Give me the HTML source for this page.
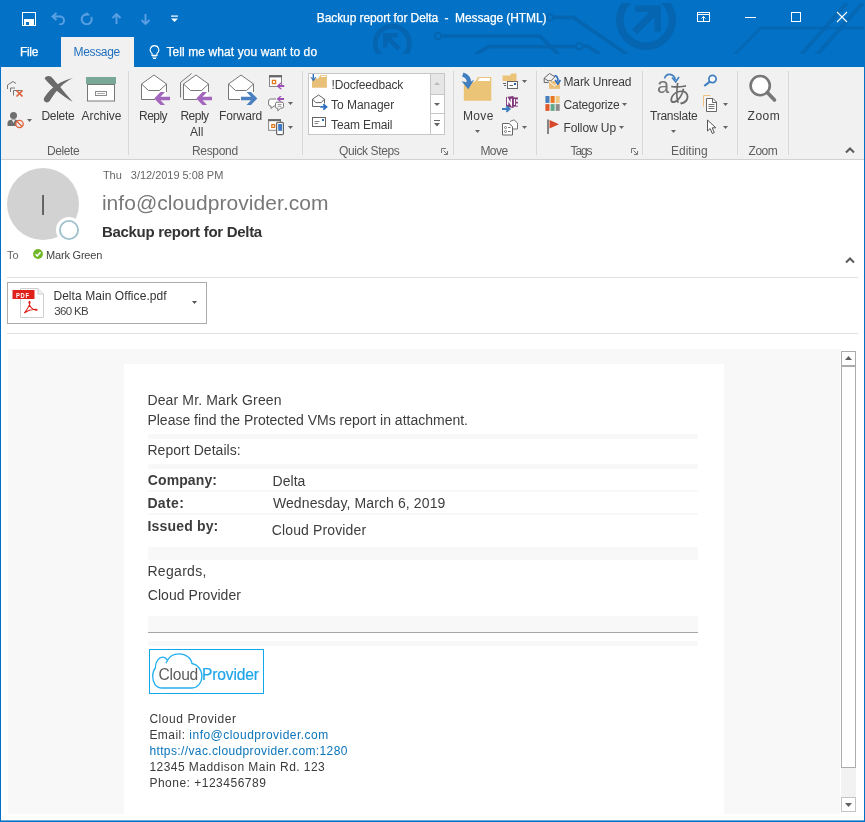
<!DOCTYPE html>
<html><head><meta charset="utf-8"><title>Backup report for Delta - Message (HTML)</title>
<style>
html,body{margin:0;padding:0;}
body{width:865px;height:822px;overflow:hidden;position:relative;background:#fff;font-family:"Liberation Sans",sans-serif;font-size:12px;color:#444;}
.a{position:absolute;white-space:nowrap;line-height:1;}
.ui{font-family:"DejaVu Sans","Liberation Sans",sans-serif;}
#tb{left:0;top:0;width:865px;height:67px;background:#0372c6;}
#rb{left:1px;top:67px;width:863px;height:92px;background:#f1f1f1;border-bottom:1px solid #d2d2d2;}
#bl{left:0;top:0;width:1px;height:822px;background:#0372c6;}
#br{left:864px;top:0;width:1px;height:822px;background:#0372c6;}
#bb{left:0;top:821px;width:865px;height:1px;background:#0372c6;}
.sep{width:1px;top:71px;height:84px;background:#d8d8d8;}
.w{color:#fff;-webkit-text-stroke:0.25px #fff;}
.gl{color:#5e5e5e;top:145.200px;}
.rt{color:#3c3c3c;}
.hl{height:1px;background:#e1e1e1;left:7px;width:851px;}
#mail{left:8px;top:349px;width:832px;height:465px;background:#f8f8f8;}
#card{left:124px;top:364px;width:600px;height:450px;background:#fff;}
.bar{left:148px;width:550px;background:#f8f8f8;}
.bt{font-size:14px;color:#3d3d3d;}
.st{font-size:12px;color:#3a3a3a;}
.lk{color:#0a74b9;}
</style></head><body>
<div id="root" style="position:absolute;left:0;top:0;width:865px;height:822px;will-change:transform;">
<div class="a" id="tb"></div>
<div class="a" id="rb"></div>
<!-- TITLE -->
<svg class="a" style="left:0;top:3px" width="865" height="51" viewBox="0 3 865 51">
<g fill="none" stroke="#0565b0" stroke-opacity="1">
<circle cx="392.300" cy="43.300" r="17" stroke-width="5"/>
<path d="M385.300 47.500 V35.300 H397.500" stroke-width="4.600" stroke-linejoin="miter"/>
<path d="M386.500 36.500 L399 49" stroke-width="5"/>
<circle cx="438" cy="36" r="3.300" stroke-width="2"/>
<path d="M442 36 H540 L558.500 54.500" stroke-width="3.600"/>
<path d="M474.500 55 L488.500 46.600 H575" stroke-width="3.600"/>
<circle cx="579.400" cy="46.300" r="3.200" stroke-width="2"/>
<path d="M583.500 46.300 H588 L600 54.500" stroke-width="3.600"/>
<circle cx="550" cy="17.400" r="3.200" stroke-width="2"/>
<path d="M554 17.400 H573.500 L628 55" stroke-width="3.600"/>
<circle cx="646.100" cy="20" r="26.200" stroke-width="7.600"/>
<path d="M635 8.700 H657.700 V31.500" stroke-width="6.400" stroke-linejoin="miter"/>
<path d="M656 10.500 L634.500 32" stroke-width="7"/>
</g>
<g fill="none" stroke="#0565b0" stroke-opacity="0.8">
<path d="M734 55 L760.500 28 H865" stroke-width="3"/>
<path d="M800 56 L848.500 1" stroke-width="4"/>
<path d="M816 56 L864.500 1" stroke-width="4"/>
</g>
</svg>

<div class="a w" id="title" style="left:316.8px;top:12.2px;font-size:12px;letter-spacing:-0.09px;">Backup report for Delta&nbsp; -&nbsp; Message (HTML)</div>
<div class="a w" id="tfile" style="left:20px;top:45.8px;font-size:12px;letter-spacing:-0.34px;">File</div>
<div class="a" style="left:61px;top:37px;width:73px;height:30px;background:#f1f1f1;"></div>
<div class="a" id="tmsg" style="left:73.5px;top:45.8px;font-size:12px;color:#1e6fbf;letter-spacing:-0.34px;">Message</div>
<div class="a w" id="ttell" style="left:166.4px;top:45.8px;font-size:12px;letter-spacing:0.1px;">Tell me what you want to do</div>
<!-- RIBBON -->
<div class="a sep" style="left:128px"></div>
<div class="a sep" style="left:302px"></div>
<div class="a sep" style="left:453px"></div>
<div class="a sep" style="left:536px"></div>
<div class="a sep" style="left:642px"></div>
<div class="a sep" style="left:737px"></div>
<div class="a sep" style="left:788px"></div>
<div class="a gl" id="g1" style="left:47px;letter-spacing:-0.4px;">Delete</div>
<div class="a gl" id="g2" style="left:192px;letter-spacing:-0.33px;">Respond</div>
<div class="a gl" id="g3" style="left:339px;letter-spacing:-0.4px;">Quick Steps</div>
<div class="a gl" id="g4" style="left:480.4px;letter-spacing:-0.55px;">Move</div>
<div class="a gl" id="g5" style="left:570.5px;letter-spacing:-1.12px;">Tags</div>
<div class="a gl" id="g6" style="left:671px;">Editing</div>
<div class="a gl" id="g7" style="left:748.5px;letter-spacing:-0.44px;">Zoom</div>
<div class="a rt" id="r1" style="left:41.5px;top:110.2px;letter-spacing:-0.3px;">Delete</div>
<div class="a rt" id="r2" style="left:81.5px;top:110.2px;letter-spacing:-0.01px;">Archive</div>
<div class="a rt" id="r3" style="left:139px;top:110.2px;letter-spacing:-0.53px;">Reply</div>
<div class="a rt" id="r4" style="left:180.4px;top:110.2px;letter-spacing:-0.5px;">Reply</div>
<div class="a rt" id="r5" style="left:190px;top:126.2px;">All</div>
<div class="a rt" id="r6" style="left:219px;top:110.2px;letter-spacing:-0.13px;">Forward</div>
<div class="a" style="left:308px;top:73px;width:135px;height:61px;background:#fff;border:1px solid #c6c6c6;box-sizing:border-box;width:137px;height:62px;"></div>
<div class="a rt" id="q1" style="left:331.5px;top:79.2px;letter-spacing:-0.14px;">!Docfeedback</div>
<div class="a rt" id="q2" style="left:331.1px;top:99.2px;letter-spacing:-0.03px;">To Manager</div>
<div class="a rt" id="q3" style="left:331.1px;top:119.2px;letter-spacing:-0.14px;">Team Email</div>
<div class="a rt" id="r7" style="left:463px;top:110.2px;letter-spacing:0.34px;">Move</div>
<div class="a rt" id="t1" style="left:563.5px;top:76.2px;letter-spacing:-0.14px;">Mark Unread</div>
<div class="a rt" id="t2" style="left:563.5px;top:99.2px;letter-spacing:-0.21px;">Categorize</div>
<div class="a rt" id="t3" style="left:563.5px;top:122.2px;letter-spacing:-0.1px;">Follow Up</div>
<div class="a rt" id="r8" style="left:650px;top:110.2px;letter-spacing:-0.23px;">Translate</div>
<div class="a rt" id="r9" style="left:747.5px;top:110.2px;letter-spacing:0.56px;">Zoom</div>
<!-- QAT ICONS -->
<svg class="a" style="left:22px;top:12px" width="14" height="14" viewBox="0 0 14 14"><rect x="0.5" y="0.5" width="13" height="13" fill="none" stroke="#fff"/><rect x="2" y="7" width="10" height="6" fill="#fff"/><rect x="4" y="10" width="3" height="3" fill="#0372c6"/></svg>
<svg class="a" style="left:51px;top:12px" width="15" height="13" viewBox="0 0 15 13"><path d="M5.5 1 L1.5 4.5 L5.5 8 M1.5 4.500 H9 a4 4 0 0 1 0 8 H8" fill="none" stroke="#5a9fe2" stroke-width="2"/></svg>
<svg class="a" style="left:80px;top:12px" width="14" height="13" viewBox="0 0 14 13"><path d="M6.500 2.200 A5 5 0 1 0 11.200 5" fill="none" stroke="#5a9fe2" stroke-width="2"/><path d="M6 0.500 L6 4.500 L10.500 2.500 Z" fill="#5a9fe2" transform="rotate(20 8 2)"/></svg>
<svg class="a" style="left:111px;top:13px" width="11" height="12" viewBox="0 0 11 12"><path d="M5.500 11 V1.500 M1.500 5 L5.500 1 L9.500 5" fill="none" stroke="#5a9fe2" stroke-width="1.900"/></svg>
<svg class="a" style="left:140px;top:13px" width="11" height="12" viewBox="0 0 11 12"><path d="M5.500 1 V10.500 M1.500 7 L5.500 11 L9.500 7" fill="none" stroke="#5a9fe2" stroke-width="1.900"/></svg>
<svg class="a" style="left:171px;top:15px" width="7" height="8" viewBox="0 0 7 8"><rect x="0" y="0.500" width="7" height="1.200" fill="#fff"/><path d="M0 3.500 H7 L3.500 7 Z" fill="#fff"/></svg>
<!-- bulb -->
<svg class="a" style="left:149px;top:45px" width="11" height="14" viewBox="0 0 11 14"><path d="M5.500 0.600 a4.300 4.300 0 0 1 2.500 7.800 V10.400 H3 V8.400 a4.300 4.300 0 0 1 2.500 -7.800 Z" fill="none" stroke="#fff" stroke-width="1.100"/><path d="M3.300 12 H7.700 M4 13.500 H7" stroke="#fff" stroke-width="1"/></svg>
<!-- WINDOW CONTROLS -->
<svg class="a" style="left:697px;top:12px" width="13" height="10" viewBox="0 0 13 10"><rect x="0.500" y="0.500" width="12" height="9" fill="none" stroke="#fff"/><path d="M0.500 2.500 H12.500" stroke="#fff"/><path d="M6.500 9 V4.500 M4.500 6.500 L6.500 4.500 L8.500 6.500" stroke="#fff" fill="none"/></svg>
<div class="a" style="left:745px;top:17px;width:11px;height:1px;background:#fff;"></div>
<div class="a" style="left:791px;top:12px;width:10px;height:10px;border:1px solid #fff;box-sizing:border-box;"></div>
<svg class="a" style="left:836px;top:11px" width="12" height="12" viewBox="0 0 12 12"><path d="M1 1 L11 11 M11 1 L1 11" stroke="#fff" stroke-width="1.100"/></svg>
<!-- DELETE GROUP ICONS -->
<svg class="a" style="left:43px;top:75px" width="31" height="28" viewBox="0 0 31 28"><path d="M1.600 3.400 C2 1.300 5.600 0.200 7.900 1.500 C13.500 7.500 20.500 16 29.600 26.800 C20.500 21.500 8.500 12 1.600 3.400 Z" fill="#6a6a6a"/><path d="M30 3 C20.500 7.500 13.500 15 6.800 25.800 C5.600 27.700 2.700 27.900 1.400 26.300 C0.400 25 0.800 23.300 1.800 21.800 C8.500 12 18 5.800 30 3 Z" fill="#6a6a6a"/></svg>
<svg class="a" style="left:86px;top:77px" width="30" height="25" viewBox="0 0 30 25"><rect x="0" y="0" width="30" height="7" fill="#79a896"/><rect x="1.500" y="7.500" width="27" height="16.500" fill="#fff" stroke="#777" stroke-width="1"/><rect x="9.500" y="14.500" width="11" height="4" fill="#fff" stroke="#8a8a8a" stroke-width="1"/><path d="M11 16.500 H19" stroke="#aaa" stroke-width="1"/></svg>
<!-- ignore -->
<svg class="a" style="left:6px;top:80px" width="18" height="18" viewBox="0 0 18 18"><path d="M1.500 9 V5 L7 1.500 L10 3.500 M4.500 12 V8 H9 M7.500 15.500 V10.500 H16" fill="none" stroke="#777" stroke-width="1"/><path d="M10.500 10.500 L16.500 16.500 M16.500 10.500 L10.500 16.500" stroke="#e0603a" stroke-width="1.700"/></svg>
<!-- junk -->
<svg class="a" style="left:7px;top:111px" width="18" height="18" viewBox="0 0 18 18"><circle cx="6.500" cy="4.500" r="3.500" fill="#6e6e6e"/><path d="M0.500 15 V12 C0.500 9.500 3 8.500 6.500 8.500 C9 8.500 11 9 12 10.500 L9 15 Z" fill="#6e6e6e"/><path d="M5 9 L6.500 12 L8 9 Z" fill="#f1f1f1"/><circle cx="12.500" cy="13" r="3.700" fill="#f1f1f1" stroke="#e0603a" stroke-width="1.300"/><path d="M10 10.500 L15 15.500" stroke="#e0603a" stroke-width="1.300"/></svg>
<svg class="a dd" style="left:27px;top:119px" width="5" height="3" viewBox="0 0 5 3"><path d="M0 0 H5 L2.500 3 Z" fill="#666"/></svg>
<!-- RESPOND ICONS -->
<svg class="a" style="left:141px;top:74px" width="32" height="32" viewBox="0 0 32 32"><path d="M0.500 25.500 V10 L13 1 L25.500 10 V25.500 Z" fill="#fff"/><path d="M14 25.500 H0.500 V10 L13 1 L25.500 10 V18 M0.500 10 L7.500 16.500 H18.500 L25.500 10" fill="none" stroke="#777" stroke-width="1"/><path d="M13.300 24.500 L19.500 18 H24 L19.500 22.700 H29 V26.300 H19.500 L24 31 H19.500 Z" fill="#a366bd"/></svg>
<svg class="a" style="left:179px;top:72px" width="36" height="34" viewBox="0 0 36 34"><path d="M1.500 25.500 V10.500 L12.500 1.500 M4.500 27.500 V12" fill="none" stroke="#777" stroke-width="1"/><path d="M4.500 27.500 V12 L17 3 L29.500 12 V27.500 Z" fill="#fff"/><path d="M18 27.500 H4.500 V12 L17 3 L29.500 12 V20 M4.500 12 L11.500 18.500 H22.500 L29.500 12" fill="none" stroke="#777" stroke-width="1"/><path d="M17.300 26.500 L23.500 20 H28 L23.500 24.700 H33 V28.300 H23.500 L28 33 H23.500 Z" fill="#a366bd"/></svg>
<svg class="a" style="left:228px;top:74px" width="32" height="32" viewBox="0 0 32 32"><path d="M0.500 25.500 V10 L13 1 L25.500 10 V25.500 Z" fill="#fff"/><path d="M12 25.500 H0.500 V10 L13 1 L25.500 10 V18 M0.500 10 L7.500 16.500 H18.500 L25.500 10" fill="none" stroke="#777" stroke-width="1"/><path d="M29.300 24.500 L23 18 H18.500 L23 22.700 H13 V26.300 H23 L18.500 31 H23 Z" fill="#4a7fc0"/></svg>
<!-- small respond icons -->
<svg class="a" style="left:268px;top:74px" width="17" height="16" viewBox="0 0 17 16"><rect x="1.500" y="1.700" width="12" height="10.800" fill="#fff" stroke="#858585"/><rect x="1" y="1.200" width="13" height="2.200" fill="#666"/><rect x="4.400" y="6.400" width="3.200" height="3.200" fill="#fff" stroke="#e07a1f" stroke-width="1.300"/><path d="M8.700 12 L12.300 8.800 H14 L11.800 11 H16.200 V13 H11.800 L14 15.200 H12.300 Z" fill="#9b4fb5"/></svg>
<svg class="a" style="left:268px;top:95px" width="17" height="17" viewBox="0 0 17 17"><path d="M8 4 H2.500 Q0.600 4 0.600 6 V9 Q0.600 11 2.500 11 H3 V13.500 L6 11 H7" fill="#fff" stroke="#777"/><path d="M9 7.200 H14 Q15.500 7.200 15.500 8.700 V11.700 Q15.500 13.200 14 13.200 H12.500 L9.800 15.800 V13.200 H9 Q7.500 13.200 7.500 11.700 V8.700 Q7.500 7.200 9 7.200 Z" fill="#fff" stroke="#777"/><path d="M9.700 9.500 H13.500 M9.700 11.300 H13.500" stroke="#999"/><path d="M8.700 3.900 L12 1 H13.700 L11.600 2.900 H16 V4.900 H11.600 L13.700 6.800 H12 Z" fill="#9b4fb5"/></svg>
<svg class="a" style="left:268px;top:118px" width="17" height="18" viewBox="0 0 17 18"><rect x="0.600" y="1.700" width="11.800" height="10.600" fill="#fff" stroke="#858585"/><rect x="0.100" y="1.200" width="12.800" height="2" fill="#666"/><rect x="3.800" y="6.600" width="2.800" height="2.800" fill="#fff" stroke="#e07a1f" stroke-width="1.300"/><rect x="8.600" y="4.400" width="6.800" height="12.200" rx="1.200" fill="#fff" stroke="#666" stroke-width="1.200"/><rect x="10.200" y="6" width="3.900" height="6.800" fill="#3d7bc7"/></svg>
<svg class="a" style="left:288px;top:102px" width="5" height="3" viewBox="0 0 5 3"><path d="M0 0 H5 L2.500 3 Z" fill="#666"/></svg>
<svg class="a" style="left:288px;top:126px" width="5" height="3" viewBox="0 0 5 3"><path d="M0 0 H5 L2.500 3 Z" fill="#666"/></svg>
<!-- QUICK STEPS -->
<div class="a" style="left:430px;top:74px;width:1px;height:60px;background:#c6c6c6;"></div>
<div class="a" style="left:431px;top:74px;width:13px;height:20px;background:#e6e6e6;"></div>
<div class="a" style="left:431px;top:94px;width:13px;height:1px;background:#c6c6c6;"></div>
<div class="a" style="left:431px;top:113px;width:13px;height:1px;background:#c6c6c6;"></div>
<svg class="a" style="left:434px;top:82px" width="6" height="3" viewBox="0 0 6 3"><path d="M0 3 H6 L3 0 Z" fill="#bbb"/></svg>
<svg class="a" style="left:434px;top:103px" width="6" height="3" viewBox="0 0 6 3"><path d="M0 0 H6 L3 3 Z" fill="#666"/></svg>
<svg class="a" style="left:434px;top:120px" width="6" height="7" viewBox="0 0 6 7"><path d="M0 0.500 H6" stroke="#666"/><path d="M0 3 H6 L3 6.500 Z" fill="#666"/></svg>
<svg class="a" style="left:310px;top:74px" width="18" height="15" viewBox="0 0 18 15"><path d="M2 4.500 H8.400 L10.200 1.200 H16.900 V13.700 H2 Z" fill="#e8c078"/><path d="M11.500 2 H16 V3 H11 Z" fill="#fff"/><path d="M3.300 0 V4.500" stroke="#2f6fbf" stroke-width="1.400"/><path d="M0.800 3.200 L3.400 7.100 L6 3.200 L3.400 4.800 Z" fill="#2f6fbf" stroke="#2f6fbf" stroke-width="0.500"/></svg>
<svg class="a" style="left:311px;top:94px" width="18" height="17" viewBox="0 0 18 17"><path d="M9 12.500 H1.500 V5.100 L7.500 1 L13.500 5.100 V9.500 M1.500 5.100 L4.800 8.600 H10.300 L13.500 5.100" fill="#fff" stroke="#666"/><path d="M9.200 12.900 H15 M12.300 10.200 L15.400 12.900 L12.300 15.600" fill="none" stroke="#2f6fbf" stroke-width="1.900"/></svg>
<svg class="a" style="left:312px;top:117px" width="15" height="11" viewBox="0 0 15 11"><rect x="0.500" y="0.500" width="13" height="9" fill="#fff" stroke="#666"/><path d="M2.500 4.500 H7.500 M2.500 6.500 H6" stroke="#888"/><rect x="10" y="2" width="2" height="2" fill="#2f6fbf"/></svg>
<svg class="a" style="left:441px;top:148px" width="7" height="7" viewBox="0 0 7 7"><path d="M0.500 5 V0.500 H5" fill="none" stroke="#777"/><path d="M2.500 2.500 L6 6 M6.500 3 V6.500 H3" fill="none" stroke="#777"/></svg>
<svg class="a" style="left:631px;top:148px" width="7" height="7" viewBox="0 0 7 7"><path d="M0.500 5 V0.500 H5" fill="none" stroke="#777"/><path d="M2.500 2.500 L6 6 M6.500 3 V6.500 H3" fill="none" stroke="#777"/></svg>
<!-- MOVE ICONS -->
<svg class="a" style="left:461px;top:72px" width="32" height="30" viewBox="0 0 32 30"><path d="M2.800 9.800 H14 L17 5 H30.300 V28.800 H2.800 Z" fill="#ecc478"/><path d="M18.300 6 H29 V9 H16.500 Z" fill="#fff"/><path d="M1.800 2.500 C6 4 8.300 7 7.800 11" fill="none" stroke="#3f7fc1" stroke-width="4.200"/><path d="M0.600 9.300 L7.300 17.300 L13 7.800 L7.800 10.800 Z" fill="#3f7fc1"/></svg>
<svg class="a" style="left:475px;top:130px" width="5" height="3" viewBox="0 0 5 3"><path d="M0 0 H5 L2.500 3 Z" fill="#666"/></svg>
<svg class="a" style="left:502px;top:73px" width="17" height="16" viewBox="0 0 17 16"><path d="M0.500 2.500 H8 L9.500 0.500 H14.500 V8 H0.500 Z" fill="#ecc478"/><rect x="5.500" y="8.500" width="10" height="7" fill="#fff" stroke="#666"/><path d="M1 10.500 H4 M2 12.500 H4 M7.500 12.500 H11" stroke="#666"/><rect x="12" y="10" width="2" height="2" fill="#2f5fa8"/></svg>
<svg class="a" style="left:502px;top:96px" width="17" height="17" viewBox="0 0 17 17"><path d="M11 1.400 H15.900 V10.600 H11 Z" fill="#80397b"/><path d="M14 3.600 H16 V5.700 H14 Z M14 7.500 H16 V9.700 H14 Z" fill="#f1f1f1"/><path d="M4.100 0.900 L11.500 0 V11.900 L4.100 10.600 Z" fill="#80397b"/><path d="M5.700 8.800 V2.800 L9.300 8.800 V2.800" fill="none" stroke="#fff" stroke-width="1.400"/><path d="M12.500 3 V9" stroke="#fff" stroke-width="1.200"/><path d="M0 13 H7 M4.300 10.200 L7.600 13 L4.300 15.800" fill="none" stroke="#3f7fc1" stroke-width="1.900"/></svg>
<svg class="a" style="left:502px;top:119px" width="17" height="17" viewBox="0 0 17 17"><path d="M8 2.500 L12 0.800 L15.500 4 V10 H11" fill="#fff" stroke="#777"/><path d="M0.500 4.500 H7 L10.500 7.500 V16 H0.500 Z" fill="#fff" stroke="#666"/><circle cx="3.500" cy="8.500" r="1" fill="none" stroke="#777"/><circle cx="3.500" cy="12.500" r="1" fill="none" stroke="#777"/><path d="M6 8.500 H8.500 M6 12.500 H8.500" stroke="#777"/></svg>
<svg class="a" style="left:522px;top:80px" width="5" height="3" viewBox="0 0 5 3"><path d="M0 0 H5 L2.500 3 Z" fill="#666"/></svg>
<svg class="a" style="left:522px;top:126px" width="5" height="3" viewBox="0 0 5 3"><path d="M0 0 H5 L2.500 3 Z" fill="#666"/></svg>
<!-- TAGS ICONS -->
<svg class="a" style="left:543px;top:72px" width="18" height="17" viewBox="0 0 18 17"><path d="M5.600 10.500 H1.200 V6.200 L6.500 1.500 L11.900 4.800 M1.200 6.200 L5 8.800 H8 L11.900 4.800" fill="none" stroke="#666"/><path d="M6 9.100 H17 V16.900 H6 Z" fill="#ecc07a"/><path d="M6 9.600 L11.500 13.800 L17 9.600" fill="none" stroke="#fff" stroke-width="1"/><path d="M11.500 3.600 C14 3.600 15.200 6 14.900 9.500" fill="none" stroke="#2f6fbf" stroke-width="1.600"/><path d="M12.200 8 L14.800 12 L17.400 8" fill="none" stroke="#2f6fbf" stroke-width="1.700"/></svg>
<svg class="a" style="left:544.500px;top:96px" width="15" height="15" viewBox="0 0 15 15"><rect x="0.400" y="0" width="4.100" height="6.900" fill="#4a7ebb"/><rect x="5.600" y="0" width="4" height="6.900" fill="#e8771f"/><rect x="10.700" y="0" width="4" height="6.900" fill="#f0c882"/><rect x="0.400" y="8.100" width="4.100" height="6.800" fill="#e25a2c"/><rect x="5.600" y="8.100" width="4" height="6.800" fill="#5fa88a"/><rect x="10.700" y="8.100" width="4" height="6.800" fill="#8c8c8c"/></svg>
<svg class="a" style="left:546px;top:119px" width="14" height="16" viewBox="0 0 14 16"><path d="M2 0.500 V15" stroke="#6a6a6a" stroke-width="1.600"/><path d="M3.500 1 L13 5.200 L3.500 9.500 Z" fill="#d9482b"/></svg>
<svg class="a" style="left:622px;top:103px" width="5" height="3" viewBox="0 0 5 3"><path d="M0 0 H5 L2.500 3 Z" fill="#666"/></svg>
<svg class="a" style="left:619px;top:126px" width="5" height="3" viewBox="0 0 5 3"><path d="M0 0 H5 L2.500 3 Z" fill="#666"/></svg>
<!-- EDITING ICONS -->
<div class="a" id="tra" style="left:657px;top:75px;font-size:22px;color:#777;font-family:'Liberation Sans',sans-serif;">a</div>
<div class="a" id="trj" style="left:668px;top:83px;font-size:24.5px;color:#6a6a6a;font-family:'Liberation Sans','Noto Sans CJK JP',sans-serif;transform:scaleX(0.92);transform-origin:0 0;">あ</div>
<svg class="a" style="left:663px;top:72px" width="17" height="12" viewBox="0 0 17 12"><path d="M1.500 6.500 C3 1 10.500 0.500 12.500 8" fill="none" stroke="#3f7fc1" stroke-width="1.600"/><path d="M9 5.500 L12.700 10 L16 5" fill="none" stroke="#3f7fc1" stroke-width="1.600"/></svg>
<svg class="a" style="left:671px;top:130px" width="5" height="3" viewBox="0 0 5 3"><path d="M0 0 H5 L2.500 3 Z" fill="#666"/></svg>
<svg class="a" style="left:703px;top:74px" width="15" height="14" viewBox="0 0 15 14"><circle cx="9.500" cy="5" r="3.600" fill="#fff" stroke="#3f7fc1" stroke-width="1.700"/><path d="M6.800 7.700 L1.300 12" stroke="#3f7fc1" stroke-width="2.200"/></svg>
<svg class="a" style="left:703px;top:95px" width="15" height="18" viewBox="0 0 15 18"><path d="M0.500 11.500 V0.500 H7.500" fill="none" stroke="#f0c080" stroke-width="1"/><path d="M3.500 3.500 H10 L13.500 7 V16.500 H3.500 Z" fill="#fff" stroke="#666"/><path d="M9.500 3.500 V7.500 H13.500" fill="none" stroke="#666"/><path d="M5.500 9.500 H11.500 M5.500 11.500 H11.500 M5.500 13.500 H11.500" stroke="#777"/></svg>
<svg class="a" style="left:706px;top:119px" width="11" height="16" viewBox="0 0 11 16"><path d="M1.500 1 V12 L4.200 9.500 L6.300 14.500 L8.300 13.600 L6.200 8.800 H9.800 Z" fill="#fff" stroke="#555" stroke-width="1"/></svg>
<svg class="a" style="left:723px;top:103px" width="5" height="3" viewBox="0 0 5 3"><path d="M0 0 H5 L2.500 3 Z" fill="#666"/></svg>
<svg class="a" style="left:723px;top:126px" width="5" height="3" viewBox="0 0 5 3"><path d="M0 0 H5 L2.500 3 Z" fill="#666"/></svg>
<!-- ZOOM ICON -->
<svg class="a" style="left:748px;top:73px" width="30" height="30" viewBox="0 0 30 30"><circle cx="12.200" cy="12.600" r="9.600" fill="#fff" stroke="#777" stroke-width="2.600"/><path d="M19.300 19.500 L26.500 27" stroke="#777" stroke-width="3.600" stroke-linecap="round"/></svg>
<svg class="a" style="left:845px;top:147px" width="10" height="7" viewBox="0 0 10 7"><path d="M1 5.500 L5 1.500 L9 5.500" fill="none" stroke="#5a5a5a" stroke-width="2"/></svg>
<!-- HEADER -->
<div class="a" style="left:7px;top:168px;width:72px;height:72px;border-radius:50%;background:#d2d2d2;"></div>
<div class="a" id="av" style="left:36px;top:189.5px;width:14px;text-align:center;font-size:30px;color:#444;transform:scaleX(0.55);">I</div>
<div class="a" style="left:56px;top:217px;width:26px;height:26px;border-radius:50%;background:#fff;"></div><svg class="a" style="left:58px;top:219px" width="22" height="22" viewBox="0 0 22 22"><circle cx="11" cy="11" r="9.100" fill="#fff" stroke="#9fc0cd" stroke-width="1.800"/></svg>
<div class="a" id="h1" style="left:102.9px;top:170px;font-size:11px;color:#666;letter-spacing:-0.03px;">Thu&nbsp;&nbsp; 3/12/2019 5:08 PM</div>
<div class="a" id="h2" style="left:101.9px;top:191.5px;font-size:21px;color:#787878;letter-spacing:0.05px;">info@cloudprovider.com</div>
<div class="a" id="h3" style="left:101.9px;top:224px;font-size:15px;color:#333;font-weight:bold;letter-spacing:-0.29px;">Backup report for Delta</div>
<div class="a" id="h4" style="left:7px;top:250px;font-size:11px;color:#666;">To</div>
<div class="a" id="h5" style="left:46.1px;top:250px;font-size:11px;color:#444;letter-spacing:-0.21px;">Mark Green</div>
<div class="a hl" style="top:277px;"></div>
<div class="a" style="left:7px;top:282px;width:200px;height:42px;border:1px solid #ababab;box-sizing:border-box;background:#fff;"></div>
<div class="a" id="at1" style="left:53.4px;top:290px;font-size:12px;color:#333;letter-spacing:0.07px;">Delta Main Office.pdf</div>
<div class="a" id="at2" style="left:54.2px;top:306px;font-size:11.5px;color:#444;letter-spacing:-0.65px;">360 KB</div>
<div class="a hl" style="top:333px;"></div>
<svg class="a" style="left:33px;top:249px" width="10" height="10" viewBox="0 0 10 10"><circle cx="5" cy="5" r="4.900" fill="#73b72b"/><path d="M2.600 5.200 L4.300 6.900 L7.500 3.300" fill="none" stroke="#fff" stroke-width="1.500"/></svg>
<!-- pdf icon -->
<svg class="a" style="left:11.600px;top:287.300px" width="33" height="32" viewBox="0 0 33 32"><path d="M8.500 1.500 H26 L31.500 7 V30.500 H8.500 Z" fill="#fff" stroke="#cfcfcf"/><path d="M26 1.500 V7 H31.500" fill="#eee" stroke="#cfcfcf"/><rect x="0.500" y="3" width="22" height="9" fill="#e0201b"/><path d="M13 25 C15.500 22 17.500 18.500 18 15.500 C18.300 14 16.800 14 17 15.500 C17.500 19 20 22.500 24 23.300 C25.500 23.500 25.300 22.200 24 22.200 C20 22.200 16 23.500 13.500 25.300 C12.300 26.200 12.300 25.800 13 25 Z" fill="none" stroke="#e0201b" stroke-width="1.100"/></svg>
<div class="a" id="pdft" style="left:16.300px;top:291.600px;font-size:7px;font-weight:bold;color:#fff;letter-spacing:0.900px;transform:scaleX(0.82);transform-origin:0 0;">PDF</div>
<svg class="a" style="left:192px;top:301px" width="5" height="3" viewBox="0 0 5 3"><path d="M0 0 H5 L2.500 3 Z" fill="#555"/></svg>
<svg class="a" style="left:845px;top:257px" width="10" height="7" viewBox="0 0 10 7"><path d="M1 5.500 L5 1.500 L9 5.500" fill="none" stroke="#5a5a5a" stroke-width="2"/></svg>
<!-- MAIL -->
<div class="a" id="mail"></div>
<div class="a" id="card"></div>
<div class="a bt" id="m1" style="left:147.4px;top:393px;letter-spacing:0.15px;">Dear Mr. Mark Green</div>
<div class="a bt" id="m2" style="left:147.4px;top:413px;">Please find the Protected VMs report in attachment.</div>
<div class="a bar" style="top:434px;height:5px;"></div>
<div class="a bt" id="m3" style="left:147.4px;top:443px;letter-spacing:0.05px;">Report Details:</div>
<div class="a bar" style="top:464px;height:5px;"></div>
<div class="a bt" id="m4" style="left:147.8px;top:473px;font-weight:bold;letter-spacing:0.1px;">Company:</div>
<div class="a bt" id="m5" style="left:272.6px;top:474px;letter-spacing:0.02px;">Delta</div>
<div class="a bar" style="top:490px;height:2px;"></div>
<div class="a bt" id="m6" style="left:147.4px;top:496px;font-weight:bold;letter-spacing:0.37px;">Date:</div>
<div class="a bt" id="m7" style="left:272.9px;top:496px;letter-spacing:0.11px;">Wednesday, March 6, 2019</div>
<div class="a bar" style="top:513px;height:2px;"></div>
<div class="a bt" id="m8" style="left:147.5px;top:519px;font-weight:bold;letter-spacing:0.17px;">Issued by:</div>
<div class="a bt" id="m9" style="left:271.8px;top:523px;letter-spacing:0.13px;">Cloud Provider</div>
<div class="a bar" style="top:547px;height:13px;"></div>
<div class="a bt" id="m10" style="left:147.4px;top:564px;letter-spacing:0.32px;">Regards,</div>
<div class="a bt" id="m11" style="left:147.8px;top:588px;letter-spacing:0.04px;">Cloud Provider</div>
<div class="a bar" style="top:616px;height:16px;"></div>
<div class="a" style="left:148px;top:632px;width:550px;height:1px;background:#a6a6a6;"></div>
<div class="a bar" style="top:641px;height:5px;"></div>
<div class="a" style="left:149px;top:649px;width:115px;height:45px;border:1px solid #12a8ea;box-sizing:border-box;"></div>
<svg class="a" style="left:150px;top:650px" width="56" height="42" viewBox="150 650 56 42"><path d="M162 688 C155.500 688 152.700 682 152.700 676.300 C152.700 672.500 153.800 669.800 155.300 668 C155.300 661.500 159 657.200 162.500 657.200 C164.500 657.200 166.200 658.300 167.600 660.300 C169.500 656.300 174 653.800 179 653.800 C186 653.800 191.500 658.500 192 663.500 C197.500 664.500 201.900 669.500 201.900 676.300 C201.900 683 197.500 688 192 688 Z" fill="none" stroke="#25b0f0" stroke-width="1.300"/><path d="M167.600 660.300 C166.800 661.300 166.300 662.300 166 663.300" fill="none" stroke="#25b0f0" stroke-width="1.300"/></svg>
<div class="a" id="lg1" style="left:158.5px;top:667.3px;font-size:15.6px;color:#5c5c5c;letter-spacing:-0.25px;">Cloud</div>
<div class="a" id="lg2" style="left:202px;top:667.3px;font-size:15.6px;color:#1fa6ea;-webkit-text-stroke:0.2px #1fa6ea;letter-spacing:-0.15px;">Provider</div>
<div class="a st" id="s1" style="left:149.4px;top:713px;letter-spacing:0.55px;">Cloud Provider</div>
<div class="a st" id="s2" style="left:149.4px;top:729px;letter-spacing:0.47px;">Email: <span class="lk">info@cloudprovider.com</span></div>
<div class="a st lk" id="s3" style="left:149.4px;top:745px;letter-spacing:0.38px;">https://vac.cloudprovider.com:1280</div>
<div class="a st" id="s4" style="left:149.4px;top:761px;letter-spacing:0.46px;">12345 Maddison Main Rd. 123</div>
<div class="a st" id="s5" style="left:149.4px;top:777px;letter-spacing:0.5px;">Phone: +123456789</div>
<!-- SCROLLBAR -->
<div class="a" style="left:841px;top:351px;width:15px;height:461px;background:#f2f2f2;"></div>
<div class="a" style="left:841px;top:351px;width:15px;height:15px;background:#fff;border:1px solid #ababab;box-sizing:border-box;"></div>
<div class="a" style="left:841px;top:366px;width:15px;height:402px;background:#fff;border:1px solid #ababab;box-sizing:border-box;"></div>
<div class="a" style="left:841px;top:797px;width:15px;height:15px;background:#fff;border:1px solid #c4c4c4;box-sizing:border-box;"></div>
<svg class="a" style="left:845px;top:356px" width="7" height="4" viewBox="0 0 7 4"><path d="M0 4 H7 L3.500 0 Z" fill="#606060"/></svg>
<svg class="a" style="left:845px;top:803px" width="7" height="4" viewBox="0 0 7 4"><path d="M0 0 H7 L3.500 4 Z" fill="#606060"/></svg>
<!-- BORDERS -->
<div class="a" style="left:0;top:820px;width:865px;height:1px;background:rgba(3,114,198,0.6);"></div>
<div class="a" id="bl"></div><div class="a" id="br"></div><div class="a" id="bb"></div>
</div>
</body></html>
